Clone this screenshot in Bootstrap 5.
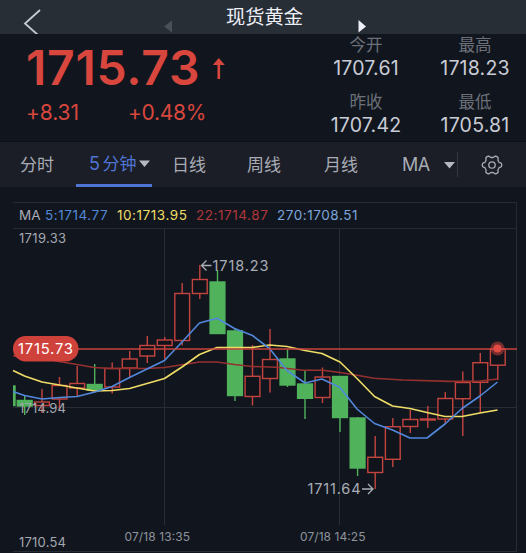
<!DOCTYPE html>
<html lang="zh-CN">
<head>
    <meta charset="UTF-8">
    <meta name="viewport" content="width=device-width, initial-scale=1.0">
    <title>现货黄金</title>
    <link href="https://cdn.jsdelivr.net/npm/bootstrap@5.3.2/dist/css/bootstrap.min.css" rel="stylesheet">
    <style>
        body {
            background-color: #11161e;
            color: #c9ccd6;
            font-family: Inter, "Noto Sans CJK SC", sans-serif;
            overflow: hidden;
        }
        svg { display: block; }
        .topbar { height: 34px; background-color: #282e36; padding-left: 23px; }
        .topbar h1 { font-size: 19.3px; line-height: 34px; width: 78px; margin-left: 54px; margin-right: 54px; color: #eef0f8; white-space: nowrap; }
        .back-btn { margin-right: 123px; }
        .arrow-nav { margin-top: 17px; }

        .quote { height: 107px; padding-left: 26px; }
        .last-block { width: 304px; color: #d8463e; }
        .last-price { font-size: 48px; font-weight: 600; line-height: 68px; height: 65px; width: 184px; letter-spacing: 0.75px; }
        .change { font-size: 21px; line-height: 28px; }
        .change span:first-child { width: 102px; letter-spacing: -0.1px; }
        .change span:last-child { letter-spacing: -0.3px; }
        .stat { width: 72px; text-align: center; height: 57px; }
        .stats { width: 182px; column-gap: 37px; }
        .stat-label { font-size: 16.5px; line-height: 23px; color: #6c7079; }
        .stat-value { font-size: 19.5px; line-height: 22px; letter-spacing: 0.2px; white-space: nowrap; }

        .period-tabs { height: 46px; background-color: #1b1e26; border-top: 1px solid #0e1118; color: #a9acb5; font-size: 17px; line-height: 46px; padding-left: 20px; }
        .period-tabs > * { white-space: nowrap; }
        .tab-min { width: 56px; }
        .tab-active { width: 76px; height: 45px; padding-top: 2px; padding-left: 13px; color: #4f74d4; border-bottom: 3px solid #4f74d4; }
        .tab-active .tab-num { font-size: 18px; margin-right: 2.5px; }
        .tab-caret { margin-left: 3px; }
        .tab-day { width: 75px; margin-left: 20px; }
        .tab-week { width: 77px; }
        .tab-month { width: 78px; }
        .tab-ma { width: 42px; font-size: 18px; letter-spacing: -0.4px; }
        .tab-sep { width: 1px; height: 25px; background-color: #343842; margin-left: 2px; margin-right: 23px; }

        .legend-row { height: 27px; margin: 15px 9px 0 13px; padding-left: 6px; border: 1px solid #242932; border-left: 0; font-size: 13.5px; line-height: 25px; letter-spacing: 0.55px; white-space: nowrap; }
        .legend-row span { display: block; }
        .lg-name { width: 26px; color: #a9acb5; letter-spacing: 0; }
        .lg-5 { width: 72px; color: #5288d6; }
        .lg-10 { width: 79px; color: #f0dd66; }
        .lg-22 { width: 81px; color: #b0373a; }
        .lg-270 { color: #7da6dc; }

        .grid-line { stroke: #272c35; stroke-width: 1; fill: none; }
        .axis-text { font-size: 13px; fill: #a3a7b0; }
        .time-text { font-size: 12px; fill: #8f939d; }
        .peak-text { font-size: 14.5px; fill: #a9adb6; }
        .peak-arrow { stroke: #a9adb6; stroke-width: 1.3; fill: none; }
        .up { stroke: #c4443f; stroke-width: 1.4; fill: #11131a; }
        .down { stroke: #50b35c; stroke-width: 1.4; fill: #50b35c; }
        .ma-line { fill: none; stroke-width: 1.6; stroke-linejoin: round; }
    </style>
</head>
<body>
    <header class="topbar d-flex align-items-start">
        <svg class="back-btn" width="18" height="34"><path d="M17 10 L2 23.5 L15 35" fill="none" stroke="#c6cad3" stroke-width="1.8"/></svg>
        <svg class="arrow-nav" width="8" height="17"><path d="M8 3.5 V15.5 L0 9.5 Z" fill="#4a4f58"/></svg>
        <h1 class="mb-0 fw-normal">现货黄金</h1>
        <svg class="arrow-nav" width="8" height="17"><path d="M0.5 3 V15.5 L8 9.5 Z" fill="#eef0fa"/></svg>
    </header>

    <section class="quote d-flex">
        <div class="last-block">
            <div class="d-flex">
                <div class="last-price">1715.73</div>
                <svg width="18" height="60"><path d="M8.8 45 V28" stroke="#d8463e" stroke-width="2.6"/><path d="M2.8 31 L8.8 24 L14.8 31 Z" fill="#d8463e"/></svg>
            </div>
            <div class="change d-flex">
                <span>+8.31</span>
                <span>+0.48%</span>
            </div>
        </div>
        <div class="stats d-flex flex-wrap">
            <div class="stat"><div class="stat-label">今开</div><div class="stat-value">1707.61</div></div>
            <div class="stat"><div class="stat-label">最高</div><div class="stat-value">1718.23</div></div>
            <div class="stat"><div class="stat-label">昨收</div><div class="stat-value">1707.42</div></div>
            <div class="stat"><div class="stat-label">最低</div><div class="stat-value">1705.81</div></div>
        </div>
    </section>

    <nav class="period-tabs d-flex align-items-center">
        <div class="tab-min">分时</div>
        <div class="tab-active d-flex align-items-center">
            <span class="tab-num">5</span><span>分钟</span>
            <svg class="tab-caret" width="11" height="8"><path d="M0 0.5 H11 L5.5 7 Z" fill="#b4b8c0"/></svg>
        </div>
        <div class="tab-day">日线</div>
        <div class="tab-week">周线</div>
        <div class="tab-month">月线</div>
        <div class="tab-ma">MA</div>
        <svg width="11" height="8"><path d="M0 1 H11 L5.5 7.5 Z" fill="#b4b8c0"/></svg>
        <div class="tab-sep"></div>
        <svg id="gear" width="22" height="22" fill="none" stroke="#a9acb5" stroke-width="1.3" stroke-linejoin="round">
            <path/>
            <circle cx="11" cy="11" r="3.2"/>
        </svg>
    </nav>

    <div class="legend-row d-flex">
        <span class="lg-name">MA</span>
        <span class="lg-5">5:1714.77</span>
        <span class="lg-10">10:1713.95</span>
        <span class="lg-22">22:1714.87</span>
        <span class="lg-270">270:1708.51</span>
    </div>

    <svg width="526" height="324" viewBox="0 229 526 324">
        <path class="grid-line" d="M516.5 229 V551 M13 551.5 H517 M13 407.5 H517 M164.5 229 V525 M339.5 229 V525"/>
        <g id="candles"></g>
        <path class="ma-line" stroke="#96302f" d="M13 356 L42 358 L59 361.5 L77 364.5 L94 367.5 L112 368.5 H147 L164.5 367.5 L199.5 362 H217 L234.5 364.5 L252 366.5 L277 367.3 L303 370.3 H323 L340 372.5 L357 375.3 L374 378.3 L403 380 L450 381.4 L480 381 L497.5 379"/>
        <path class="ma-line" stroke="#f0dd66" d="M13 370.5 L24.5 376 L42 382 L59.5 385 L77 388 L94.7 391 L112 390.5 L129.5 388.5 L147 383.5 L164.5 378.5 L182 367 L199.5 354.5 L217 347.5 H252 L269.5 345 L287 346.5 L305 350.5 L322 353.5 L340 362 L357 378.5 L374.5 396.5 L392.5 406 L410 408.5 L427 412.5 L445 416.5 H462 L480 413 L497.5 410"/>
        <path class="ma-line" stroke="#5288dc" d="M13 391.5 L24.5 395.5 L42 399 L59.5 397.5 L77 396.5 L95 392 L112 386.5 L129.5 377.5 L147 369 L164.5 360.5 L182 342 L199.5 323 L217 318.3 L234.5 328.5 L252.5 335.5 L269.5 348.5 L287 370.5 L305 383 L322 379 L340 387.5 L357 409 L374.5 423.5 L392.5 430 L410 438 H427 L445 424 L462 408.5 L480 396 L497.5 382"/>

        <!-- current price -->
        <path d="M13 349 H517" stroke="#c8433d" stroke-width="1.6"/>
        <circle cx="497.5" cy="348.5" r="7" fill="#d8463e" fill-opacity="0.5"/>
        <circle cx="497.5" cy="348.5" r="4" fill="#e04c44"/>
        <rect x="13" y="336" width="65.5" height="25.5" rx="12.5" fill="#cf423b"/>
        <text x="18" y="354" font-size="14.8" fill="#fff" textLength="55">1715.73</text>

        <text class="axis-text" x="19" y="242.8" textLength="47">1719.33</text>
        <text class="axis-text" x="19" y="412.8" textLength="47">1714.94</text>
        <text class="axis-text" x="19" y="547" textLength="47">1710.54</text>
        <text class="time-text" x="124.5" y="541" textLength="65.5">07/18 13:35</text>
        <text class="time-text" x="300" y="541" textLength="65.5">07/18 14:25</text>
        <text class="peak-text" x="212.5" y="270.8" textLength="56">1718.23</text>
        <path class="peak-arrow" d="M211.5 265.5 H201.5 M206.5 260.5 L201.5 265.5 L206.5 270.5"/>
        <text class="peak-text" x="307.5" y="494.2" textLength="53">1711.64</text>
        <path class="peak-arrow" d="M362 489 H373 M368 484 L373 489 L368 494"/>
    </svg>

    <script src="https://cdn.jsdelivr.net/npm/bootstrap@5.3.2/dist/js/bootstrap.bundle.min.js"></script>
    <script>
        // [type, x, body top, body bottom, high, low]
        const candles = [
            ["down", 24.7, 400.5, 406, 395, 415],
            ["up", 42, 402, 405.5, 389, 413],
            ["up", 59.5, 385.5, 399, 377, 410],
            ["up", 77.2, 383.5, 388, 366, 396],
            ["down", 94.7, 384.5, 390, 364, 390],
            ["up", 112.2, 368.5, 387, 362.5, 393.5],
            ["up", 129.7, 359, 368, 351, 378],
            ["up", 147.3, 345.5, 356, 336, 363],
            ["up", 164.7, 340, 345.5, 337, 359],
            ["up", 182.2, 293.5, 340.5, 283, 345.5],
            ["up", 199.8, 279.5, 293.5, 265, 299],
            ["down", 217.5, 282, 333.5, 270, 334],
            ["down", 235, 331, 395.5, 328, 401],
            ["up", 252.5, 376.3, 396.5, 345, 405.5],
            ["up", 270, 359.5, 378.5, 329, 392.5],
            ["down", 287.5, 359, 385, 349.5, 387],
            ["down", 305, 384, 398.3, 371, 419],
            ["up", 322.5, 377, 397.5, 367.5, 403],
            ["down", 340, 376.5, 417.5, 376, 432],
            ["down", 357.6, 418, 468, 417, 476],
            ["up", 375.2, 457.3, 472.5, 436, 489],
            ["up", 392.8, 426.7, 459.3, 418, 467],
            ["up", 410.3, 419.5, 426.5, 410, 433],
            ["up", 427.8, 419, 420, 406, 428],
            ["up", 445.3, 398.5, 419, 392, 424],
            ["up", 462.8, 382.5, 398.7, 371.5, 436],
            ["up", 480.3, 362.7, 382.3, 353, 413],
            ["up", 497.8, 349, 365.2, 349, 380]
        ];
        const half = 7.4;
        let out = '<rect class="down" x="13.7" y="386" width="1.3" height="19.5"/>';
        candles.forEach(([type, x, top, bottom, high, low]) => {
            out += `<path class="${type}" d="M${x} ${high} V${top} M${x} ${bottom} V${low}"/>`;
            out += `<rect class="${type}" x="${x - half}" y="${top}" width="${half * 2}" height="${bottom - top}"/>`;
        });
        document.getElementById("candles").innerHTML = out;

        // gear outline with six soft teeth
        let gear = "";
        for (let a = 0; a < 360; a += 5) {
            const t = a * Math.PI / 180;
            const r = 8.6 + 1.1 * Math.tanh(2.2 * Math.cos(6 * t));
            gear += (a ? "L" : "M") + (11 + r * Math.cos(t)).toFixed(2) + " " + (11 + r * Math.sin(t)).toFixed(2);
        }
        document.querySelector("#gear path").setAttribute("d", gear + "Z");
    </script>
</body>
</html>
